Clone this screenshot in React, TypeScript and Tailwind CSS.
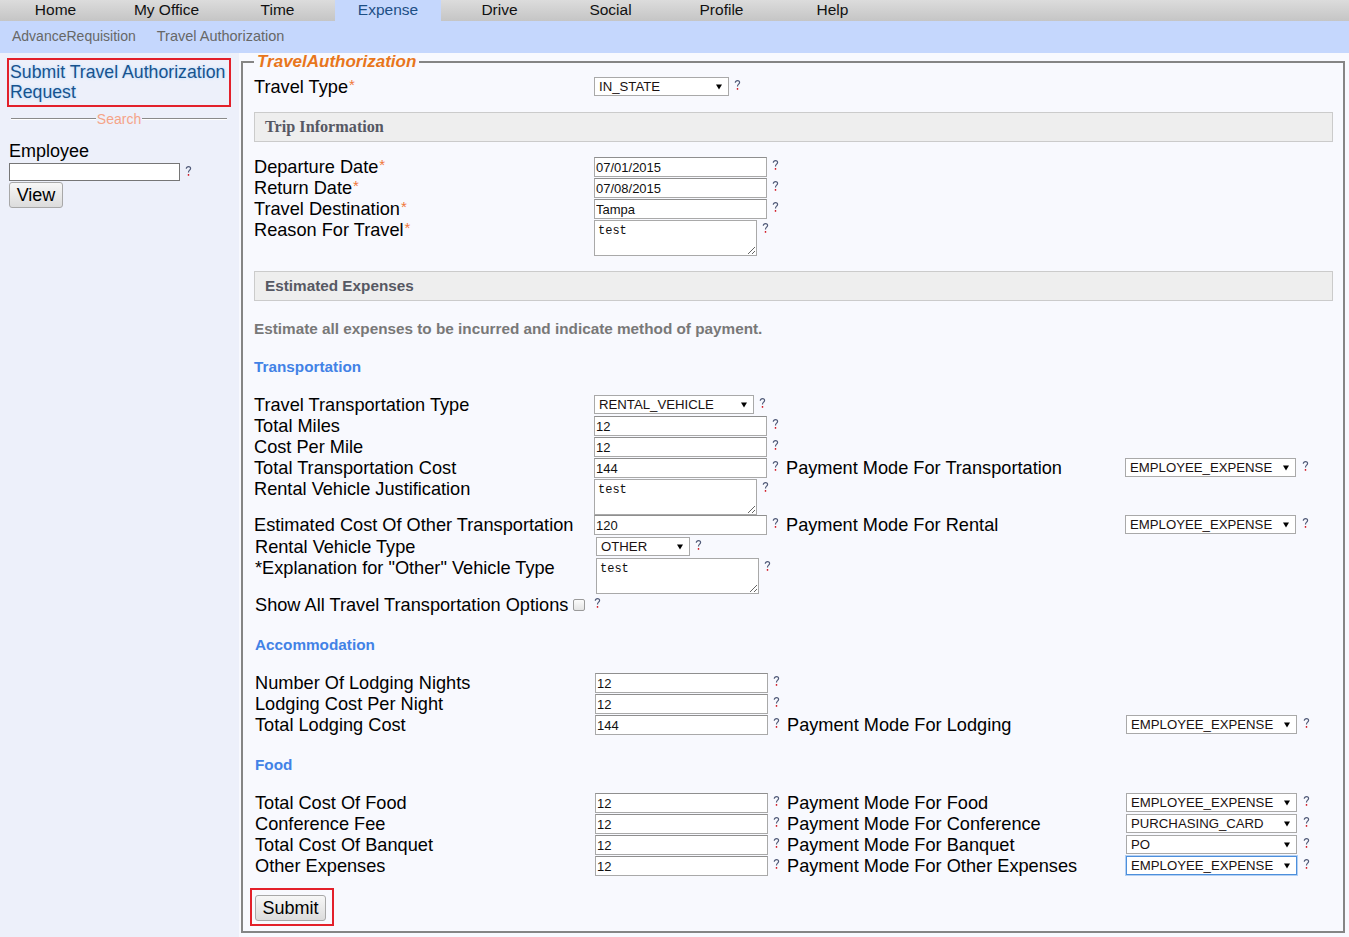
import React from 'react';

const tabs = ['Home', 'My Office', 'Time', 'Expense', 'Drive', 'Social', 'Profile', 'Help'];

// little "?" help marker: slate hook with a red dot
const Help = () => (
  <svg width="7" height="10" viewBox="0 0 7 10" className="mt-[3px] shrink-0">
    <path
      d="M1.3 2.7C1.3 1.3 2.3 0.7 3.5 0.7C4.7 0.7 5.6 1.5 5.6 2.6C5.6 3.6 4.9 4.1 4.2 4.6C3.7 5 3.5 5.4 3.5 6.4"
      fill="none"
      stroke="#505a78"
      strokeWidth="1.2"
    />
    <rect x="2.8" y="8" width="1.4" height="1.8" fill="#d3202b" />
  </svg>
);

const Arrow = () => (
  <svg width="6" height="6" viewBox="0 0 6 6" className="shrink-0">
    <polygon points="0,0.5 6,0.5 3,5.5" fill="#000" />
  </svg>
);

const Select = ({ value, className = '', focus = false }: { value: string; className?: string; focus?: boolean }) => (
  <div
    className={`flex h-[19px] shrink-0 items-center justify-between bg-white pr-[6px] pl-[4px] text-[13.2px] leading-none text-[#1a1111] ${
      focus ? 'border border-[#4d8fdc] shadow-[0_0_0_1px_#b3d0f3]' : 'border border-[#a9a9a9]'
    } ${className}`}
  >
    <span>{value}</span>
    <Arrow />
  </div>
);

const TextInput = ({ value }: { value: string }) => (
  <input
    readOnly
    value={value}
    className="h-[20px] w-[173px] shrink-0 border border-[#a9a9a9] border-t-[#8f8f8f] bg-white px-[1px] text-[13px] text-[#111] outline-none"
  />
);

const TextArea = ({ value }: { value: string }) => (
  <textarea
    readOnly
    value={value}
    className="h-[36px] w-[163px] shrink-0 border border-[#a9a9a9] bg-white px-[3px] pt-[3px] font-['Liberation_Mono',monospace] text-[12px] leading-[15px] text-[#111] outline-none"
  />
);

type RowProps = {
  label: string;
  req?: boolean;
  h?: string;
  pay?: string;
  payValue?: string;
  focus?: boolean;
  children: React.ReactNode;
};

const Row = ({ label, req, h = 'h-[21px]', pay, payValue, focus, children }: RowProps) => (
  <div className={`flex items-start ${h}`}>
    <div className="w-[340px] shrink-0 text-[18.2px] leading-[20px] text-black">
      {label}
      {req && <span className="ml-[1px] align-top text-[15px] leading-[15px] text-[#f0773a]">*</span>}
    </div>
    <div className="flex w-[192px] shrink-0 items-start gap-[5px]">
      {children}
      <Help />
    </div>
    {pay && (
      <>
        <div className="w-[339px] shrink-0 text-[18.2px] leading-[20px] text-black">{pay}</div>
        <div className="flex items-start gap-[6px]">
          <Select value={payValue ?? ''} className="w-[171px]" focus={focus} />
          <Help />
        </div>
      </>
    )}
  </div>
);

const Header = ({ children, serif }: { children: React.ReactNode; serif?: boolean }) => (
  <div
    className={`flex h-[30px] items-center border border-[#cbcbcb] bg-[#eeeeee] pl-[10px] font-bold text-[#565863] ${
      serif ? "font-['Liberation_Serif',serif] text-[16.2px]" : 'text-[15.3px]'
    }`}
  >
    {children}
  </div>
);

const Heading = ({ children, className = '' }: { children: React.ReactNode; className?: string }) => (
  <div className={`text-[15.3px] leading-[18px] font-bold text-[#4282e6] ${className}`}>{children}</div>
);

const Button = ({ children, className = '' }: { children: React.ReactNode; className?: string }) => (
  <button
    className={`h-[26px] rounded-[3px] border border-[#a8a8a8] bg-linear-to-b from-[#f7f7f7] to-[#dcdcdc] text-[18px] leading-none text-black ${className}`}
  >
    {children}
  </button>
);

export default function App() {
  return (
    <div className="flex min-h-[937px] flex-col bg-[#f8f9fe] font-['Liberation_Sans',Arial,sans-serif]">
      {/* main tabs */}
      <div className="flex h-[21px] bg-linear-to-b from-[#dcdcdc] to-[#c5c5c5] text-[15.5px] text-[#111]">
        {tabs.map((t) => (
          <div key={t} className="flex w-[111px] shrink-0">
            {t === 'Expense' ? (
              <div className="mr-[3px] ml-[2px] flex flex-1 items-center justify-center bg-[#c5d7fd] pb-[2px] text-[#1d4f85]">
                {t}
              </div>
            ) : (
              <div className="flex flex-1 items-center justify-center pb-[2px]">{t}</div>
            )}
          </div>
        ))}
      </div>
      {/* sub tabs */}
      <div className="flex h-[32px] items-center bg-[#c5d7fd] pb-[1px] pl-[12px] text-[14px] text-[#676767]">
        <span>AdvanceRequisition</span>
        <span className="ml-[21px] text-[14.5px]">Travel Authorization</span>
      </div>

      <div className="flex flex-1">
        {/* sidebar */}
        <aside className="w-[239px] shrink-0 bg-[#edf0fa] pt-[5px]">
          <div className="ml-[7px] h-[49px] w-[224px] border-2 border-[#e3202a] pt-[2px] pl-[1px] text-[17.7px] leading-[20px] text-[#17538e] [text-shadow:0_0_3px_#a9d3fb]">
            Submit Travel Authorization Request
          </div>
          <div className="mt-[4px] ml-[11px] flex w-[216px] items-center">
            <div className="h-[2px] flex-1 border-t border-b border-t-[#8a8a8a] border-b-white" />
            <span className="px-[1px] text-[14px] leading-[16px] text-[#f5a488]">Search</span>
            <div className="h-[2px] flex-1 border-t border-b border-t-[#8a8a8a] border-b-white" />
          </div>
          <div className="mt-[14px] ml-[9px] text-[18px] leading-[20px] text-black">Employee</div>
          <div className="mt-[2px] ml-[9px] flex items-start gap-[5px]">
            <input readOnly className="h-[18px] w-[171px] border border-[#767676] bg-white outline-none" />
            <Help />
          </div>
          <Button className="mt-[1px] ml-[9px] w-[54px]">View</Button>
        </aside>

        {/* main form */}
        <fieldset className="mb-[4px] ml-[2px] w-[1104px] shrink-0 border-2 border-[#858585] pt-[6px] pr-[10px] pb-[5px] pl-[11px]">
          <legend className="px-[3px] text-[17px] leading-[18px] font-bold text-[#e8761c] italic">TravelAuthorization</legend>

          <Row label="Travel Type" req h="h-[19px]">
            <Select value="IN_STATE" className="w-[135px]" />
          </Row>

          <div className="mt-[16px]">
            <Header serif>Trip Information</Header>
          </div>

          <div className="mt-[15px]">
            <Row label="Departure Date" req>
              <TextInput value="07/01/2015" />
            </Row>
            <Row label="Return Date" req>
              <TextInput value="07/08/2015" />
            </Row>
            <Row label="Travel Destination" req>
              <TextInput value="Tampa" />
            </Row>
            <Row label="Reason For Travel" req h="h-[36px]">
              <TextArea value="test" />
            </Row>
          </div>

          <div className="mt-[15px]">
            <Header>Estimated Expenses</Header>
          </div>

          <div className="mt-[19px] text-[15.3px] leading-[18px] font-bold text-[#787878]">
            Estimate all expenses to be incurred and indicate method of payment.
          </div>

          <Heading className="mt-[20px]">Transportation</Heading>

          <div className="mt-[19px]">
            <Row label="Travel Transportation Type">
              <Select value="RENTAL_VEHICLE" className="w-[160px]" />
            </Row>
            <Row label="Total Miles">
              <TextInput value="12" />
            </Row>
            <Row label="Cost Per Mile">
              <TextInput value="12" />
            </Row>
            <Row label="Total Transportation Cost" pay="Payment Mode For Transportation" payValue="EMPLOYEE_EXPENSE">
              <TextInput value="144" />
            </Row>
            <Row label="Rental Vehicle Justification" h="h-[36px]">
              <TextArea value="test" />
            </Row>
            <Row label="Estimated Cost Of Other Transportation" pay="Payment Mode For Rental" payValue="EMPLOYEE_EXPENSE">
              <TextInput value="120" />
            </Row>
          </div>

          <div className="mt-[1px] pl-[1px]">
            <Row label="Rental Vehicle Type">
              <Select value="OTHER" className="ml-[1px] w-[94px]" />
            </Row>
            <Row label={'*Explanation for "Other" Vehicle Type'} h="h-[37px]">
              <div className="ml-[1px]">
                <TextArea value="test" />
              </div>
            </Row>
            <div className="flex h-[20px] items-start">
              <span className="text-[18.2px] leading-[20px] text-black">Show All Travel Transportation Options</span>
              <span className="mt-[4px] ml-[5px] h-[12px] w-[12px] rounded-[2px] border border-[#9a9a9a] bg-linear-to-b from-[#fbfbfb] to-[#e4e4e4]" />
              <span className="ml-[9px]">
                <Help />
              </span>
            </div>
          </div>

          <div className="pl-[1px]">
            <Heading className="mt-[21px]">Accommodation</Heading>
            <div className="mt-[19px]">
              <Row label="Number Of Lodging Nights">
                <TextInput value="12" />
              </Row>
              <Row label="Lodging Cost Per Night">
                <TextInput value="12" />
              </Row>
              <Row label="Total Lodging Cost" pay="Payment Mode For Lodging" payValue="EMPLOYEE_EXPENSE">
                <TextInput value="144" />
              </Row>
            </div>

            <Heading className="mt-[20px]">Food</Heading>
            <div className="mt-[19px]">
              <Row label="Total Cost Of Food" pay="Payment Mode For Food" payValue="EMPLOYEE_EXPENSE">
                <TextInput value="12" />
              </Row>
              <Row label="Conference Fee" pay="Payment Mode For Conference" payValue="PURCHASING_CARD">
                <TextInput value="12" />
              </Row>
              <Row label="Total Cost Of Banquet" pay="Payment Mode For Banquet" payValue="PO">
                <TextInput value="12" />
              </Row>
              <Row label="Other Expenses" pay="Payment Mode For Other Expenses" payValue="EMPLOYEE_EXPENSE" focus>
                <TextInput value="12" />
              </Row>
            </div>
          </div>

          <div className="mt-[11px] -ml-[4px] h-[38px] w-[84px] border-2 border-[#e3202a] pt-[5px] pl-[3px]">
            <Button className="w-[71px]">Submit</Button>
          </div>
        </fieldset>
      </div>
    </div>
  );
}
